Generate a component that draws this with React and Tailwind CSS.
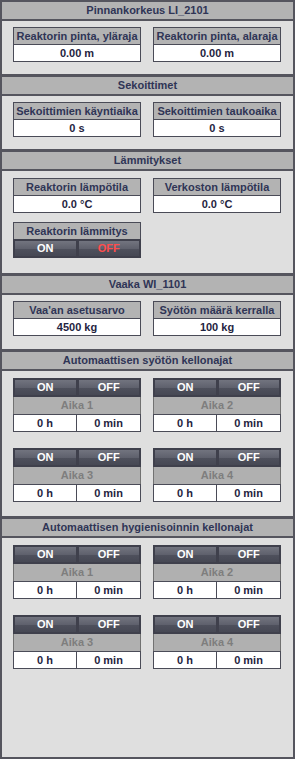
const font = "font-['Liberation_Sans',Arial,sans-serif]";

const Header = ({ title, first }) => (
  <div
    className={`${first ? "h-[19px]" : "h-[22px] border-t-[3px]"} shrink-0 bg-[#b3b3b3] border-b-2 border-[#55555e] flex items-center justify-center text-[#2f3556]`}
  >
    {title}
  </div>
);

const ValueBox = ({ label, value }) => (
  <div className="border border-[#4a4b57]">
    <div className="h-[17px] bg-[#b3b3b3] border-b border-[#4a4b57] flex items-center justify-center text-[#2f3556] whitespace-nowrap">
      {label}
    </div>
    <div className="h-[16px] bg-white flex items-center justify-center text-[#1f2441]">
      {value}
    </div>
  </div>
);

const Buttons = ({ offRed }) => (
  <div className="h-[19px] border-2 border-[#3f404c] bg-[#3f404c] grid grid-cols-2 gap-[3px]">
    <div className="bg-[linear-gradient(to_bottom,#72747f,#5f616d_50%,#4e505c_55%,#464854)] flex items-center justify-center text-white">
      ON
    </div>
    <div
      className={`bg-[linear-gradient(to_bottom,#72747f,#5f616d_50%,#4e505c_55%,#464854)] flex items-center justify-center ${
        offRed ? "text-[#ff4d4d]" : "text-white"
      }`}
    >
      OFF
    </div>
  </div>
);

const Schedule = ({ n }) => (
  <div>
    <Buttons />
    <div className="h-[17px] bg-[#b0b0b0] border-x border-[#727272] flex items-center justify-center text-[#7e7e7e]">
      Aika {n}
    </div>
    <div className="h-[18px] bg-white border border-[#4a4b57] grid grid-cols-2 text-[#1f2441]">
      <div className="border-r border-[#4a4b57] flex items-center justify-center">0 h</div>
      <div className="flex items-center justify-center">0 min</div>
    </div>
  </div>
);

const ScheduleSection = () => (
  <div className="pt-[7px] pl-[11px] pr-[12px] grid grid-cols-2 gap-x-[12px] gap-y-[16px]">
    <Schedule n={1} />
    <Schedule n={2} />
    <Schedule n={3} />
    <Schedule n={4} />
  </div>
);

export default function App() {
  return (
    <div
      className={`${font} w-[295px] h-[759px] bg-[#dfdfdf] border-2 border-[#55555e] flex flex-col text-[11px] font-bold leading-none`}
    >
      <Header title="Pinnankorkeus LI_2101" first />
      <div className="pt-[6px] pb-[12px] pl-[11px] pr-[12px] grid grid-cols-2 gap-[12px]">
        <ValueBox label="Reaktorin pinta, yläraja" value="0.00 m" />
        <ValueBox label="Reaktorin pinta, alaraja" value="0.00 m" />
      </div>

      <Header title="Sekoittimet" />
      <div className="pt-[6px] pb-[12px] pl-[11px] pr-[12px] grid grid-cols-2 gap-[12px]">
        <ValueBox label="Sekoittimien käyntiaika" value="0 s" />
        <ValueBox label="Sekoittimien taukoaika" value="0 s" />
      </div>

      <Header title="Lämmitykset" />
      <div className="pt-[7px] pb-[15px] pl-[11px] pr-[12px] grid grid-cols-2 gap-x-[12px] gap-y-[9px]">
        <ValueBox label="Reaktorin lämpötila" value="0.0 °C" />
        <ValueBox label="Verkoston lämpötila" value="0.0 °C" />
        <div>
          <div className="h-[17px] bg-[#b3b3b3] border-x border-t border-[#4a4b57] flex items-center justify-center text-[#2f3556]">
            Reaktorin lämmitys
          </div>
          <Buttons offRed />
        </div>
      </div>

      <Header title="Vaaka WI_1101" />
      <div className="pt-[6px] pb-[13px] pl-[11px] pr-[12px] grid grid-cols-2 gap-[12px]">
        <ValueBox label="Vaa'an asetusarvo" value="4500 kg" />
        <ValueBox label="Syötön määrä kerralla" value="100 kg" />
      </div>

      <Header title="Automaattisen syötön kellonajat" />
      <div className="pb-[14px]">
        <ScheduleSection />
      </div>

      <Header title="Automaattisen hygienisoinnin kellonajat" />
      <div className="flex-1">
        <ScheduleSection />
      </div>
    </div>
  );
}
